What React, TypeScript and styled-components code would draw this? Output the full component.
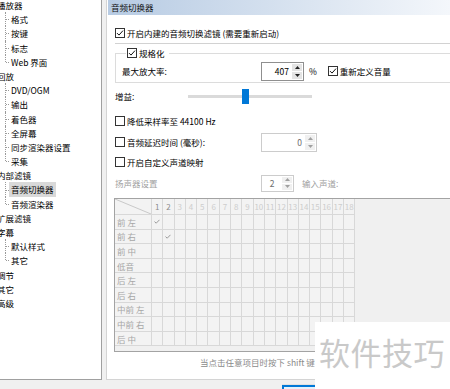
import React from 'react';
import styled, { createGlobalStyle } from 'styled-components';

const Global = createGlobalStyle`
  html, body { margin: 0; padding: 0; background: #f0f0f0; }
  body {
    font-family: "Noto Sans CJK SC", "Noto Sans", sans-serif;
    font-size: 8.5px;
    color: #000;
    overflow: hidden;
  }
  #root { width: 450px; height: 389px; overflow: hidden; }
`;

const Page = styled.div`
  position: relative;
  width: 450px;
  height: 389px;
  display: flex;
  flex-direction: column;
  overflow: hidden;
`;

const Main = styled.div`
  display: flex;
  height: 380px;
`;

/* ---------- Tree ---------- */
const TreePanel = styled.div`
  width: 102px;
  height: 380px;
  box-sizing: border-box;
  background: #fff;
  border-right: 1px solid #a0a0a0;
  border-bottom: 1px solid #a0a0a0;
  overflow: hidden;
  flex: none;
`;

const TreeList = styled.div`
  margin-top: -2px;
  display: flex;
  flex-direction: column;
`;

const RootRow = styled.div`
  height: 14.2px;
  line-height: 14.2px;
  white-space: nowrap;
  margin-left: -3px;
`;

const ChildRow = styled.div<{ $last?: boolean }>`
  position: relative;
  height: 14.2px;
  line-height: 14.2px;
  padding-left: 9px;
  white-space: nowrap;
  &::before {
    content: '';
    position: absolute;
    left: 5px;
    top: 0;
    bottom: ${p => (p.$last ? '50%' : '0')};
    border-left: 1px dotted #9a9a9a;
  }
  &::after {
    content: '';
    position: absolute;
    left: 6px;
    top: 50%;
    width: 3px;
    border-top: 1px dotted #9a9a9a;
  }
`;

const ChildLabel = styled.span<{ $selected?: boolean }>`
  display: inline-block;
  padding: 0 2px;
  background: ${p => (p.$selected ? '#d9d9d9' : 'transparent')};
`;

/* ---------- Right panel ---------- */
const RightPanel = styled.div`
  flex: 1;
  min-width: 0;
  margin-left: 4px;
  height: 380px;
  box-sizing: border-box;
  background: #fff;
  border-left: 1px solid #d4d4d4;
  border-bottom: 1px solid #d4d4d4;
  overflow: hidden;
  display: flex;
  flex-direction: column;
`;

const Header = styled.div`
  margin-left: 1px;
  height: 15px;
  line-height: 15px;
  padding-left: 3px;
  background: linear-gradient(to right, #b7cbe3, #f4f7fb);
  color: #111;
  white-space: nowrap;
`;

const Body = styled.div`
  padding-left: 8px;
  display: flex;
  flex-direction: column;
`;

const Row = styled.div<{ $mt?: number; $h?: number; $muted?: boolean }>`
  display: flex;
  align-items: center;
  height: ${p => p.$h ?? 20}px;
  margin-top: ${p => p.$mt ?? 0}px;
  white-space: nowrap;
  color: ${p => (p.$muted ? '#a0a0a0' : '#000')};
`;

const Separator = styled.div`
  height: 1px;
  background: #d2d2d2;
`;

const Group = styled.fieldset`
  margin: 3px 0 0 0;
  padding: 1px 0 0 6px;
  border: 1px solid #dcdcdc;
  border-right: none;
  min-width: 0;
`;

const Legend = styled.legend`
  display: flex;
  align-items: center;
  height: 12px;
  margin-left: 4px;
  padding: 0 4px 0 1px;
  white-space: nowrap;
`;

const Label = styled.span<{ $w?: number }>`
  display: inline-flex;
  align-items: center;
  width: ${p => (p.$w ? `${p.$w}px` : 'auto')};
  flex: none;
`;

const Box = styled.span`
  display: inline-flex;
  align-items: center;
  justify-content: center;
  width: 10px;
  height: 10px;
  box-sizing: border-box;
  border: 1px solid #333;
  background: #fff;
  margin-right: 2px;
  flex: none;
`;

const Check: React.FC<{ checked?: boolean }> = ({ checked }) => (
  <Box>
    {checked && (
      <svg width="8" height="8" viewBox="0 0 8 8">
        <path d="M1 4.1 L3 6.1 L7 1.6" fill="none" stroke="#111" strokeWidth="1" />
      </svg>
    )}
  </Box>
);

const SpinFrame = styled.div<{ $w: number; $h: number; $disabled?: boolean }>`
  width: ${p => p.$w}px;
  height: ${p => p.$h}px;
  box-sizing: border-box;
  border: 1px solid ${p => (p.$disabled ? '#cccccc' : '#8f8f8f')};
  background: #fff;
  display: flex;
  align-items: center;
  flex: none;
`;

const SpinValue = styled.span<{ $center?: boolean; $disabled?: boolean }>`
  flex: 1;
  text-align: ${p => (p.$center ? 'center' : 'right')};
  padding-right: ${p => (p.$center ? 0 : 3)}px;
  color: ${p => (p.$disabled ? '#6d6d6d' : '#000')};
`;

const SpinButtons = styled.div`
  width: 11px;
  height: 100%;
  box-sizing: border-box;
  padding: 1px 1px 1px 0;
  display: flex;
  flex-direction: column;
  gap: 1px;
`;

const SpinBtn = styled.div<{ $disabled?: boolean }>`
  flex: 1;
  background: ${p => (p.$disabled ? '#f0f0f0' : '#e4e4e4')};
  display: flex;
  align-items: center;
  justify-content: center;
`;

const Arrow: React.FC<{ up?: boolean; color: string }> = ({ up, color }) => (
  <svg width="5" height="3" viewBox="0 0 5 3">
    <path d={up ? 'M0 3 L2.5 0 L5 3Z' : 'M0 0 L2.5 3 L5 0Z'} fill={color} />
  </svg>
);

const Spin: React.FC<{ value: string; w: number; h: number; disabled?: boolean; center?: boolean }> = ({
  value,
  w,
  h,
  disabled,
  center,
}) => (
  <SpinFrame $w={w} $h={h} $disabled={disabled}>
    <SpinValue $center={center} $disabled={disabled}>
      {value}
    </SpinValue>
    <SpinButtons>
      <SpinBtn $disabled={disabled}>
        <Arrow up color={disabled ? '#a0a0a0' : '#222'} />
      </SpinBtn>
      <SpinBtn $disabled={disabled}>
        <Arrow color={disabled ? '#a0a0a0' : '#222'} />
      </SpinBtn>
    </SpinButtons>
  </SpinFrame>
);

const Unit = styled.span<{ $ml: number }>`
  margin-left: ${p => p.$ml}px;
  flex: none;
`;

const SliderTrack = styled.div`
  position: relative;
  width: 124px;
  height: 3px;
  background: #dadada;
  flex: none;
`;

const SliderThumb = styled.div<{ $left: number }>`
  position: absolute;
  left: ${p => p.$left}px;
  top: -6px;
  width: 7px;
  height: 15px;
  background: #0078d7;
`;

/* ---------- Matrix ---------- */
const MatrixBox = styled.div`
  margin-top: 5px;
  margin-left: -1px;
  height: 154px;
  box-sizing: border-box;
  border: 1px solid #a3a3a3;
  border-right: none;
  background: #f0f0f0;
  overflow: hidden;
`;

const Matrix = styled.div`
  display: grid;
  grid-template-columns: 37px repeat(18, 11.3px);
  grid-template-rows: 16px repeat(9, 14.6px);
  width: max-content;
`;

const Cell = styled.div<{ $tone?: 'dark' | 'light' }>`
  box-sizing: border-box;
  border-right: 1px solid #d8d8d8;
  border-bottom: 1px solid #d8d8d8;
  background: #f3f3f3;
  display: flex;
  align-items: center;
  justify-content: center;
  font-size: 8px;
  color: ${p => (p.$tone === 'dark' ? '#8c8c8c' : '#cdcdcd')};
  overflow: visible;
  white-space: nowrap;
`;

const CornerCell = styled.div`
  box-sizing: border-box;
  border-right: 1px solid #d8d8d8;
  border-bottom: 1px solid #d8d8d8;
  background: #f3f3f3;
  & > svg { display: block; }
`;

const RowHead = styled.div`
  box-sizing: border-box;
  border-right: 1px solid #d8d8d8;
  border-bottom: 1px solid #d8d8d8;
  background: #f3f3f3;
  display: flex;
  align-items: center;
  padding-left: 2px;
  color: #a6a6a6;
  white-space: nowrap;
`;

const Tick = () => (
  <svg width="6" height="5" viewBox="0 0 6 5">
    <path d="M0.5 2.6 L2.2 4.2 L5.5 0.8" fill="none" stroke="#9a9a9a" strokeWidth="1" />
  </svg>
);

const Hint = styled.div`
  height: 20px;
  display: flex;
  align-items: center;
  padding-left: 85px;
  color: #8a8a8a;
  white-space: nowrap;
`;

/* ---------- Footer / overlay ---------- */
const Footer = styled.div`
  height: 9px;
  padding-left: 282px;
  display: flex;
  align-items: flex-start;
`;

const FocusButton = styled.div`
  margin-top: 5px;
  width: 76px;
  height: 12px;
  box-sizing: border-box;
  border: 2px solid #0078d7;
  background: #e5f1fb;
  box-shadow: 0 -1px 0 #e2e2e2;
`;

const Watermark = styled.div`
  position: absolute;
  left: 315px;
  top: 322px;
  right: 0;
  bottom: 0;
  background: #fff;
  color: #c9c9c9;
  font-size: 31px;
  letter-spacing: 0.5px;
  padding-left: 4px;
  padding-top: 13px;
  line-height: 1.1;
  white-space: nowrap;
`;

type Node = { label: string; children?: string[] };
const tree: Node[] = [
  { label: '播放器', children: ['格式', '按键', '标志', 'Web 界面'] },
  { label: '回放', children: ['DVD/OGM', '输出', '着色器', '全屏幕', '同步渲染器设置', '采集'] },
  { label: '内部滤镜', children: ['音频切换器', '音频渲染器'] },
  { label: '扩展滤镜' },
  { label: '字幕', children: ['默认样式', '其它'] },
  { label: '调节' },
  { label: '其它' },
  { label: '高级' },
];

const speakers = ['前 左', '前 右', '前 中', '低音', '后 左', '后 右', '中前 左', '中前 右', '后 中'];

export default function App() {
  return (
    <>
      <Global />
      <Page>
        <Main>
          <TreePanel>
            <TreeList>
              {tree.map(node => (
                <React.Fragment key={node.label + (node.children ? 'g' : '')}>
                  <RootRow>{node.label}</RootRow>
                  {node.children?.map((c, i) => (
                    <ChildRow key={c} $last={i === node.children!.length - 1}>
                      <ChildLabel $selected={c === '音频切换器'}>{c}</ChildLabel>
                    </ChildRow>
                  ))}
                </React.Fragment>
              ))}
            </TreeList>
          </TreePanel>

          <RightPanel>
            <Header>音频切换器</Header>
            <Body>
              <Row $mt={8}>
                <Check checked />
                开启内建的音频切换滤镜 (需要重新启动)
              </Row>
              <Separator />
              <Group>
                <Legend>
                  <Check checked />
                  规格化
                </Legend>
                <Row $h={22}>
                  <Label $w={139}>最大放大率:</Label>
                  <Spin value="407" w={43} h={19} />
                  <Unit $ml={5}>%</Unit>
                  <Unit $ml={11}>
                    <Label>
                      <Check checked />
                      重新定义音量
                    </Label>
                  </Unit>
                </Row>
              </Group>
              <Row $mt={3}>
                <Label $w={73}>增益:</Label>
                <SliderTrack>
                  <SliderThumb $left={54} />
                </SliderTrack>
              </Row>
              <Row $mt={5}>
                <Check />
                降低采样率至 44100 Hz
              </Row>
              <Row $mt={1}>
                <Label $w={146}>
                  <Check />
                  音频延迟时间 (毫秒):
                </Label>
                <Spin value="0" w={56} h={19} disabled />
              </Row>
              <Row>
                <Check />
                开启自定义声道映射
              </Row>
              <Row $mt={1} $muted>
                <Label $w={146}>扬声器设置</Label>
                <Spin value="2" w={33} h={17} disabled center />
                <Unit $ml={8}>输入声道:</Unit>
              </Row>
              <MatrixBox>
                <Matrix>
                  <CornerCell>
                    <svg width="36" height="15" viewBox="0 0 36 15">
                      <line x1="0" y1="0" x2="36" y2="15" stroke="#c8c8c8" strokeWidth="1" />
                    </svg>
                  </CornerCell>
                  {Array.from({ length: 18 }, (_, i) => (
                    <Cell key={`h${i}`} $tone={i < 2 ? 'dark' : 'light'}>
                      {i + 1}
                    </Cell>
                  ))}
                  {speakers.map((s, r) => (
                    <React.Fragment key={s}>
                      <RowHead>{s}</RowHead>
                      {Array.from({ length: 18 }, (_, c) => (
                        <Cell key={`${r}-${c}`}>{r < 2 && c === r ? <Tick /> : null}</Cell>
                      ))}
                    </React.Fragment>
                  ))}
                </Matrix>
              </MatrixBox>
              <Hint>当点击任意项目时按下 shift 键</Hint>
            </Body>
          </RightPanel>
        </Main>
        <Footer>
          <FocusButton />
        </Footer>
        <Watermark>软件技巧</Watermark>
      </Page>
    </>
  );
}
